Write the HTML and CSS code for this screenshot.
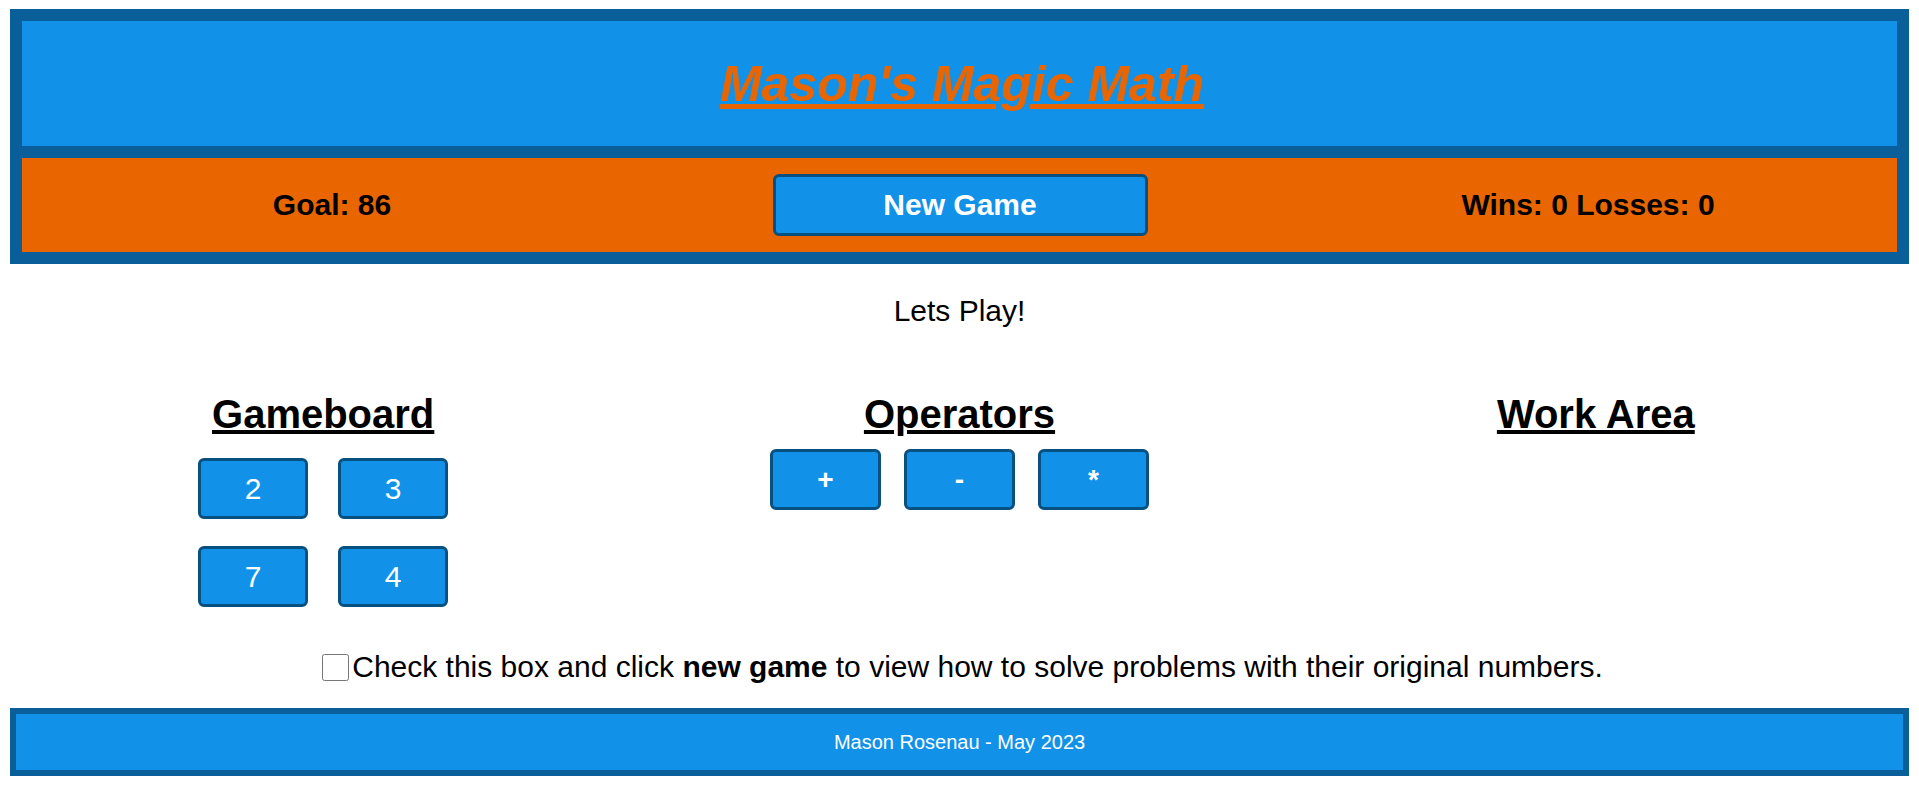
FILE: index.html
```html
<!DOCTYPE html>
<html lang="en">
<head>
<meta charset="utf-8">
<title>Mason's Magic Math</title>
<link rel="stylesheet" href="styles.css">
</head>
<body>
<div class="page">
  <header class="header">
    <div class="title-bar">
      <h1 class="title">Mason's Magic Math</h1>
    </div>
    <nav class="nav">
      <div class="nav-row">
        <div class="nav-cell"><h3 class="nav-text">Goal: 86</h3></div>
        <div class="nav-cell"><button class="new-game">New Game</button></div>
        <div class="nav-cell"><h3 class="nav-text">Wins: 0 Losses: 0</h3></div>
      </div>
    </nav>
  </header>

  <p class="status">Lets Play!</p>

  <main class="board">
    <section class="col">
      <h2 class="col-title">Gameboard</h2>
      <div class="numbers">
        <button class="tile">2</button>
        <button class="tile">3</button>
        <button class="tile">7</button>
        <button class="tile">4</button>
      </div>
    </section>
    <section class="col">
      <h2 class="col-title">Operators</h2>
      <div class="ops">
        <button class="tile op">+</button>
        <button class="tile op">-</button>
        <button class="tile op">*</button>
      </div>
    </section>
    <section class="col">
      <h2 class="col-title">Work Area</h2>
    </section>
  </main>

  <label class="hint">
    <input type="checkbox" class="check">
    <span>Check this box and click <b>new game</b> to view how to solve problems with their original numbers.</span>
  </label>

  <footer class="footer">Mason Rosenau - May 2023</footer>
</div>
</body>
</html>
```

FILE: styles.css
```css
* { box-sizing: border-box; }

body {
  margin: 0;
  font-family: "Liberation Sans", Arial, sans-serif;
  color: #000;
  background: #fff;
}

.page {
  padding: 9px 10px 0;
}

.header {
  border: 12px solid #0a5e9a;
  background: #0a5e9a;
}

.title-bar {
  height: 125px;
  background: #1192e8;
  display: flex;
  align-items: center;
  justify-content: center;
}

.title {
  margin: 0;
  padding-left: 5px;
  font-size: 50px;
  font-weight: bold;
  font-style: italic;
  text-decoration: underline;
  color: #e96500;
}

.nav {
  margin-top: 12px;
  height: 94px;
  background: #e96500;
  display: flex;
  align-items: center;
}

.nav-row {
  flex: 1;
  margin: 0 -5px 0 -4px;
  display: grid;
  grid-template-columns: 1fr 1fr 1fr;
  align-items: center;
}

.nav-cell {
  display: flex;
  justify-content: center;
  align-items: center;
}

.nav-text {
  margin: 0;
  font-size: 30px;
  font-weight: bold;
}

.new-game {
  width: 375px;
  height: 62px;
  background: #1192e8;
  border: 3px solid #07507f;
  border-radius: 6px;
  color: #fff;
  font-family: "Liberation Sans", Arial, sans-serif;
  font-size: 30px;
  font-weight: bold;
}

.status {
  margin: 30px 0 0;
  text-align: center;
  font-size: 30px;
}

.board {
  margin: 64px -5px 0;
  display: grid;
  grid-template-columns: 1fr 1fr 1fr;
  height: 258px;
}

.col {
  display: flex;
  flex-direction: column;
  align-items: center;
}

.col-title {
  margin: 0;
  font-size: 40px;
  font-weight: bold;
  text-decoration: underline;
}

.numbers {
  margin-top: 21px;
  display: grid;
  grid-template-columns: 110px 110px;
  column-gap: 30px;
  row-gap: 27px;
}

.ops {
  margin-top: 12px;
  display: flex;
  gap: 23px;
}

.tile {
  width: 110px;
  height: 61px;
  background: #1192e8;
  border: 3px solid #07507f;
  border-radius: 6px;
  color: #fff;
  font-family: "Liberation Sans", Arial, sans-serif;
  font-size: 30px;
}

.op {
  width: 111px;
  font-weight: bold;
  font-size: 28px;
}

.hint {
  display: flex;
  justify-content: center;
  align-items: center;
  padding-left: 6px;
  font-size: 30px;
}

.check {
  margin: 0 3px 0 0;
  width: 27px;
  height: 27px;
}

.footer {
  margin-top: 24px;
  height: 68px;
  border: 6px solid #0a5e9a;
  background: #1192e8;
  color: #fff;
  font-size: 20px;
  display: flex;
  align-items: center;
  justify-content: center;
}
```
